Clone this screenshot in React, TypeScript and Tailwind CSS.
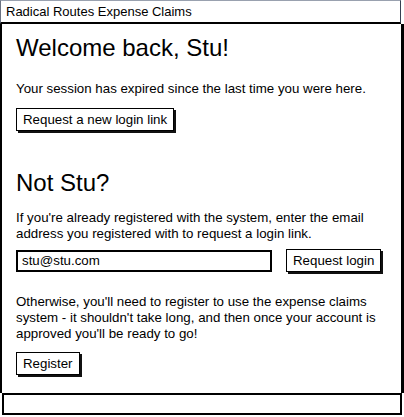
function SketchButton({ label }: { label: string }) {
  return (
    <button className="h-[23px] border border-black bg-white px-[6px] text-[13.3px] leading-none text-black shadow-[2px_2px_0_#111]">
      {label}
    </button>
  );
}

function App() {
  return (
    <div className="w-[404px] h-[417px] bg-white font-['Liberation_Sans',sans-serif] text-black">
      <header className="flex h-[24px] items-center border-t border-l border-r border-b-2 border-t-gray-400 border-l-gray-500 border-r-gray-700 border-b-black pl-[5px] mr-[3px]">
        <span className="text-[13px] leading-none">Radical Routes Expense Claims</span>
      </header>

      <main className="h-[369px] border-l-2 border-r-[3px] border-black pl-[14px] pr-4">
        <h1 className="pt-[9px] text-[24px] leading-[30px]">Welcome back, Stu!</h1>
        <p className="mt-[18px] text-[13.3px] leading-[16px]">
          Your session has expired since the last time you were here.
        </p>
        <div className="mt-[10px]">
          <SketchButton label="Request a new login link" />
        </div>

        <h2 className="mt-[37px] text-[24px] leading-[30px]">Not Stu?</h2>
        <p className="mt-[12px] text-[13.3px] leading-[16px]">
          If you're already registered with the system, enter the email address you registered with to request a login link.
        </p>
        <div className="mt-[7px] flex items-center gap-[14px]">
          <input
            className="h-[22px] w-[256px] border-2 border-black px-[4px] text-[13.3px] outline-none"
            defaultValue="stu@stu.com"
          />
          <SketchButton label="Request login" />
        </div>

        <p className="mt-[22px] text-[13.3px] leading-[16px]">
          Otherwise, you'll need to register to use the expense claims system - it shouldn't take long, and then once your account is approved you'll be ready to go!
        </p>
        <div className="mt-[9px]">
          <SketchButton label="Register" />
        </div>
      </main>

      <footer className="h-[22px] border-2 border-black ml-[2px] mr-[2px]" />
    </div>
  );
}

export default App;
